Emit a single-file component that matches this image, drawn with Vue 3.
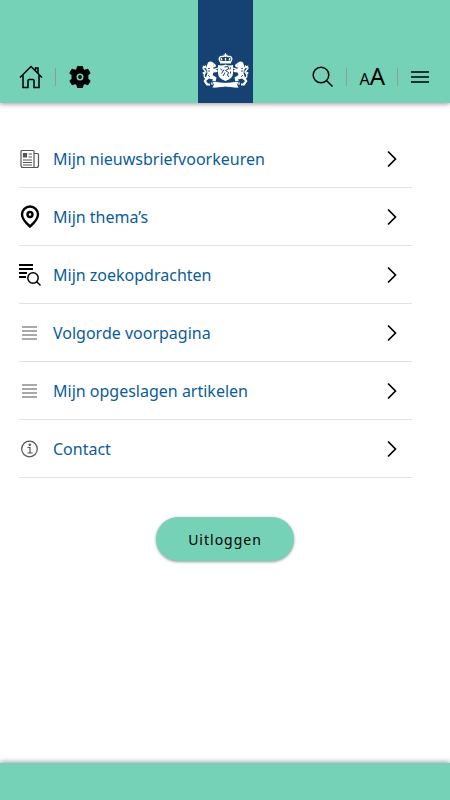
<script setup>
const items = [
    { label: 'Mijn nieuwsbriefvoorkeuren', icon: 'news' },
    { label: 'Mijn thema’s', icon: 'pin' },
    { label: 'Mijn zoekopdrachten', icon: 'search' },
    { label: 'Volgorde voorpagina', icon: 'list' },
    { label: 'Mijn opgeslagen artikelen', icon: 'list' },
    { label: 'Contact', icon: 'info' },
];
</script>

<template>
    <div class="page">
        <header class="header">
            <nav class="tools">
                <a href="#" aria-label="Home">
                    <svg width="24" height="24" viewBox="0 0 24 24" class="line">
                        <path d="M1 12.500 12 1.500l11 11M4 10v12.500h5v-7q0-1 1-1h4q1 0 1 1v7h5V10" />
                        <path d="M16.500 5.500V3H19v5" />
                    </svg>
                </a>
                <span class="divider"></span>
                <button type="button" aria-label="Instellingen">
                    <svg width="24" height="24" viewBox="0 0 24 24">
                        <path
                            d="M9.500 1.500h5l.6 2.800 1.700 1 3.100-1.100 2.200 3.900-2.200 2.200v3.400l2.200 2.200-2.200 3.900-3.100-1.100-1.700 1-.6 2.800h-5l-.6-2.800-1.700-1-3.100 1.100-2.200-3.900L4 13.700v-3.400L1.800 8.100 4 4.200l3.100 1.100 1.700-1z"
                            stroke="#000"
                            stroke-linejoin="round"
                        />
                        <circle cx="12" cy="12" r="2.700" stroke="#76d2b6" stroke-width="1.600" />
                    </svg>
                </button>
            </nav>

            <a href="#" class="logo" aria-label="Rijksoverheid">
                <svg width="47" height="36" viewBox="0 0 47 36" fill="#fff">
                    <!-- crown -->
                    <path d="M23 0h1v1.500h1.500v1H24v1.500h-1V2.500h-1.500v-1H23z" />
                    <path
                        d="M18.500 9q-2-3-1-4.500t3.500-1q2.500-1.500 5 0 2.500-.5 3.500 1t-1 4.500zM20 7.500 19 5m4.500 2.500V5m3.500 2.500L28 5"
                        fill="none"
                        stroke="#fff"
                        stroke-width="1.300"
                    />
                    <path d="M18 8h11v2.500H18z" />
                    <!-- shield -->
                    <path d="M16 12q4 1 7.500-.5 3.500 1.500 7.500.5v8q0 5.500-7.500 8Q16 25.500 16 20z" />
                    <path
                        d="m18.500 15.500 1.500 2m2.500-3.500 3.500-.500.500 2.500-3 1.500 3 2-1 2.500 1.500 2M22 16.500l-2.500 4m3.500-1-2 3.500m7.500-8.500-.500 2m.500 2v2"
                        fill="none"
                        stroke="#154273"
                        stroke-width="1"
                    />
                    <g id="lion">
                        <path
                            d="M6 9.500q2.500-2 5 0l3 2.500-.5 2-2.500.5 1 2 3.500.5v2l-4 .5-1 2.500 4 2.500-1 4.500 2 1v1.500H9l.5-2 1.500-3-4-1-3 2.500 2 2.500h2v2H4.500L1.500 28l2.500-3.500L5.500 20 4 15z"
                        />
                        <path
                            d="M5 25.500q-4-1-2.500-4.500l1.500-2-2-2.500q-2-1.500 0-3"
                            fill="none"
                            stroke="#fff"
                            stroke-width="1.300"
                        />
                        <path d="m.5 12.500 2 .5 1.500-1v3l-2 .5zm0 7 2-1 .5 1.500-2 1.500zM11 16l5-1.500v1L12 17.500z" />
                        <path d="M6 15.500h2M5.500 18H8m3.500-6h.5M6 22l2 2" stroke="#154273" stroke-width=".8" />
                    </g>
                    <use href="#lion" transform="matrix(-1 0 0 1 47 0)" />
                    <!-- ribbon -->
                    <path
                        d="M10 28.500h3.500q10 2 20 0H37l-1.500 3 1.500 3.500h-4q-9.500-2-19 0h-4l1.500-3.500z"
                        stroke="#154273"
                        stroke-width=".8"
                    />
                </svg>
            </a>

            <nav class="tools right">
                <button type="button" aria-label="Zoeken">
                    <svg width="22" height="22" viewBox="0 0 22 22" class="line">
                        <circle cx="9" cy="9" r="7.800" />
                        <path d="m14.500 14.500 6 6" />
                    </svg>
                </button>
                <span class="divider"></span>
                <button type="button" class="text-size" aria-label="Tekstgrootte">
                    <span class="small">A</span><span>A</span>
                </button>
                <span class="divider"></span>
                <button type="button" aria-label="Menu">
                    <svg width="20" height="14" viewBox="0 0 20 14" class="line">
                        <path d="M1 2h18M1 7h18M1 12h18" />
                    </svg>
                </button>
            </nav>
        </header>

        <main class="main">
            <ul class="list">
                <li v-for="item in items" :key="item.label">
                    <a href="#">
                        <span class="icon">
                            <svg v-if="item.icon === 'news'" width="21" height="20" viewBox="0 0 21 20" class="thin">
                                <path d="M3 1.500h11q1 0 1 1V17q0 1.500 1 1.500H4q-2 0-2-2v-14q0-1 1-1z" />
                                <path d="M15 4.500h3.500q1 0 1 1v11q0 2-2 2H16" />
                                <path d="M9.500 5H13M9.500 8H13M4 11h9M4 13.500h9M4 16h9" />
                                <path d="M4.500 4.500h3v3.500h-3z" fill="#555" />
                            </svg>
                            <svg v-else-if="item.icon === 'pin'" width="22" height="24" viewBox="0 0 22 24" class="bold">
                                <path d="M11 21.500Q3 14.500 3 9.500a8 8 0 0 1 16 0q0 5-8 12z" />
                                <circle cx="11" cy="9.500" r="2.500" />
                            </svg>
                            <svg v-else-if="item.icon === 'search'" width="22" height="24" viewBox="0 0 22 24" class="line">
                                <path d="M0 2h14M0 6h14M0 10h8M0 14h7" stroke-width="1.800" />
                                <circle cx="14" cy="15" r="5.200" />
                                <path d="m17.500 18.500 4 4" />
                            </svg>
                            <svg v-else-if="item.icon === 'list'" width="20" height="16" viewBox="0 0 20 16" class="thin">
                                <path d="M3 2h15M3 6h15M3 10h15M3 14h15" />
                            </svg>
                            <svg v-else width="21" height="20" viewBox="0 0 21 20" class="thin">
                                <circle cx="10.500" cy="10" r="7.800" />
                                <path d="M8.500 8.500h2.500v5.500M8.500 14h5" />
                                <circle cx="10.800" cy="5.800" r=".6" fill="#555" />
                            </svg>
                        </span>
                        <span class="label">{{ item.label }}</span>
                        <svg class="chevron" width="12" height="18" viewBox="0 0 12 18">
                            <path d="m2.500 2 7 7-7 7" />
                        </svg>
                    </a>
                </li>
            </ul>
            <button type="button" class="logout">Uitloggen</button>
        </main>

        <footer class="footer"></footer>
    </div>
</template>

<style>
body {
    margin: 0;
}
</style>

<style scoped>
.page {
    display: flex;
    flex-direction: column;
    min-height: 100vh;
    background: #fff;
    font-family: 'Noto Sans', 'Open Sans', sans-serif;
}

button {
    padding: 0;
    border: 0;
    background: none;
    color: #000;
    font-family: inherit;
    cursor: pointer;
}

a {
    color: inherit;
    text-decoration: none;
}

svg {
    display: block;
}

.header {
    display: grid;
    grid-template-columns: 1fr 55px 1fr;
    background: #76d2b6;
    box-shadow: 0 1px 5px rgba(0, 0, 0, 0.4);
}

.tools {
    display: flex;
    align-items: center;
    gap: 12px;
    height: 52px;
    padding: 51px 0 0 19px;
}

.tools.right {
    justify-content: flex-end;
    padding: 51px 20px 0 0;
}

.divider {
    width: 1px;
    height: 18px;
    background: #929b97;
}

.logo {
    display: flex;
    flex-direction: column;
    align-items: center;
    justify-content: flex-end;
    padding-bottom: 14px;
    background: #154273;
}

.text-size {
    display: flex;
    align-items: baseline;
    font-size: 24px;
    line-height: 24px;
}

.text-size .small {
    font-size: 16px;
}

.line,
.thin,
.bold,
.chevron {
    fill: none;
    stroke: #000;
    stroke-width: 1.5;
}

.thin {
    stroke: #555;
    stroke-width: 1.2;
}

.bold {
    stroke-width: 2.4;
}

.chevron {
    stroke-width: 1.7;
    stroke-linecap: round;
}

.main {
    display: flex;
    flex: 1;
    flex-direction: column;
    align-items: center;
    padding: 27px 38px 28px 19px;
}

.list {
    align-self: stretch;
    margin: 0;
    padding: 0;
    list-style: none;
}

.list a {
    display: flex;
    align-items: center;
    height: 57px;
    padding-right: 14px;
    border-bottom: 1px solid #e2e2e2;
    color: #0b5c9c;
    font-size: 16px;
    line-height: 24px;
}

.icon {
    width: 34px;
}

.label {
    flex: 1;
}

.logout {
    height: 44px;
    margin: 39px 0 0 19px;
    padding: 0 32px;
    border-radius: 22px;
    background: #76d2b6;
    box-shadow: 0 1px 3px rgba(0, 0, 0, 0.4);
    font-size: 14px;
    letter-spacing: 1px;
}

.footer {
    height: 37px;
    background: #76d2b6;
    box-shadow: 0 -1px 5px rgba(0, 0, 0, 0.4);
}
</style>
